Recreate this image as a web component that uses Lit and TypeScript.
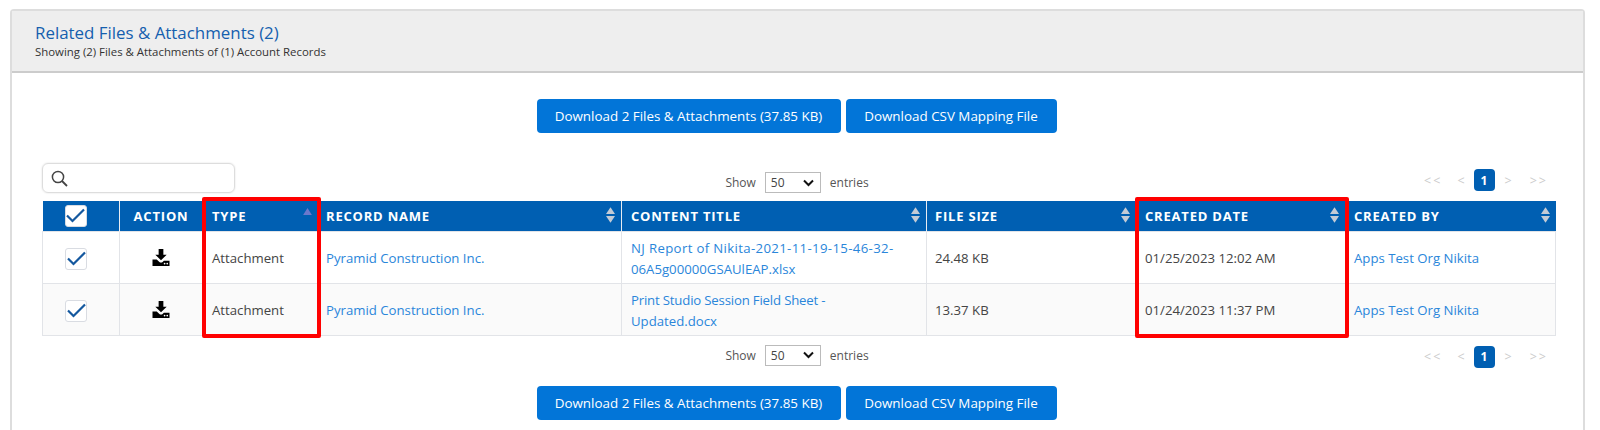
import { LitElement, html, css, svg } from "lit";
import { customElement } from "lit/decorators.js";

const COLS = [77, 84, 114, 304, 305, 210, 209, 210];

const check = html`<span class="cb"><svg width="19" height="15" viewBox="0 0 19 15"><path d="M1 7.5 L6.5 13 L18 1.5" fill="none" stroke="#14589f" stroke-width="2.2"/></svg></span>`;

const dl = html`<svg class="dl" width="18" height="17" viewBox="0 0 18 18"><path d="M6.5 0h5v6h3.5L9 12 3 6h3.5z" fill="#000"/><path d="M0 11h4.5L7 13.5a3 3 0 0 0 4 0L12 12.5h6V18H0z" fill="#000"/><circle cx="12.8" cy="15.4" r=".9" fill="#fff"/><circle cx="15.6" cy="15.4" r=".9" fill="#fff"/></svg>`;

const sort = html`<svg class="sort" width="9" height="16" viewBox="0 0 10 17"><path d="M5 0 10 7.5H0z" fill="#c3cbd6"/><path d="M5 17 10 9.5H0z" fill="#c3cbd6"/></svg>`;
const sortUp = html`<svg class="sortup" width="9" height="7" viewBox="0 0 10 8"><path d="M5 0 10 8H0z" fill="#6a78cc"/></svg>`;

const chevron = svg`<path d="M1 1.5 5.5 6 10 1.5" fill="none" stroke="#111" stroke-width="2"/>`;

@customElement("app-root")
export class AppRoot extends LitElement {
  static styles = css`
    :host { display: block; width: 1600px; height: 430px; overflow: hidden; background: #fff; font-family: "Open Sans", "Noto Sans", sans-serif; color: #444; }
    .card { margin: 9px 15px 0 10px; border: 1px solid #ddd; border-width: 2px 2px 0 2px; border-radius: 4px 4px 0 0; height: 500px; background: #fff; }
    .head { background: #eee; border-bottom: 2px solid #ccc; padding: 11px 0 0 23px; height: 49px; }
    .title { font-size: 16.9px; line-height: 22px; color: #155fae; }
    .sub { font-size: 11.4px; line-height: 14px; color: #333; margin-top: 1px; }
    .body { padding: 26px 28px 0 30px; }
    .btns { display: flex; justify-content: center; gap: 5px; margin-left: -4px; }
    .btn { background: #0275d8; color: #fff; border: 0; border-radius: 4px; height: 34px; font: 13.4px "Open Sans", sans-serif; display: flex; align-items: center; justify-content: center; }
    .b1 { width: 304px; }
    .b2 { width: 211px; }
    .bar { display: grid; grid-template-columns: 1fr auto 1fr; height: 21px; }
    .top { margin-top: 30px; height: 38px; }
    .search { width: 193px; height: 30px; box-sizing: border-box; border: 1px solid #ddd; border-radius: 6px; box-shadow: 0 0 2px #ddd; display: flex; align-items: center; padding-left: 8px; }
    .len { display: flex; align-items: center; font-size: 12px; color: #555; grid-column: 2; margin-right: 3px; height: 21px; align-self: start; }
    .top .len { margin-top: 9px; }
    .sel { width: 56px; height: 21px; box-sizing: border-box; border: 1px solid #bbb; margin: 0 9px; display: flex; align-items: center; justify-content: space-between; padding: 0 6px 0 5px; color: #444; }
    .pager { grid-column: 3; justify-self: end; align-self: start; height: 22px; margin-top: 1px; display: flex; align-items: center; font-size: 12.5px; color: #ccc; letter-spacing: 2px; margin-right: 7px; }
    .top .pager { margin-top: 6px; }
    .pg { display: inline-block; white-space: nowrap; }
    .cur { width: 21px; height: 22px; background: #005fb2; color: #fff; border-radius: 4px; display: flex; align-items: center; justify-content: center; font-weight: 700; letter-spacing: 0; font-size: 12px; margin: 0 10px 0 7px; }
    .gap { margin-right: 15px; }
    .gap2 { margin-left: 16px; }
    .wrap { position: relative; width: 1513px; }
    table { border-collapse: collapse; table-layout: fixed; width: 1513px; font-size: 13.2px; }
    th { background: #005fb2; color: #fff; height: 30px; box-sizing: border-box; padding: 0 8px; text-align: left; font-size: 13px; font-weight: 700; letter-spacing: .8px; position: relative; border-left: 1px solid #e8ecf2; white-space: nowrap; }
    th:first-child { border-left: 0; }
    th:nth-child(5), td:nth-child(5) { padding-left: 9px; }
    th.center, td.center { text-align: center; padding: 0 2px 0 0; }
    th.center { padding: 0 1px 0 0; }
    th.first, td.first { padding: 0 0 0 22px; }
    td { height: 52px; box-sizing: border-box; padding: 3px 8px 0; border: 1px solid #e2e4e8; line-height: 21px; color: #444; }
    td.first { padding-top: 3px; }
    tr.alt td { background: #fafafa; }
    a { color: #2a86da; text-decoration: none; }
    .wide { letter-spacing: .35px; }
    .tight { letter-spacing: -.18px; }
    .cb { display: inline-flex; width: 22px; height: 22px; box-sizing: border-box; background: #fff; border: 1px solid #d9dce2; border-radius: 3px; align-items: center; justify-content: center; vertical-align: middle; }
    .dl { vertical-align: middle; }
    .sort { position: absolute; right: 6px; top: 6px; }
    .sortup { position: absolute; right: 5px; top: 7px; }
    .red { position: absolute; border: 4px solid #f00; border-radius: 2px; box-sizing: border-box; top: -4px; height: 141px; pointer-events: none; }
    .r1 { left: 160px; width: 119px; }
    .r2 { left: 1093px; width: 214px; }
    .bottom { margin-top: 9px; }
    .btns2 { margin-top: 20px; }
  `;

  private bar(cls: string, search: boolean) {
    return html`<div class="bar ${cls}">
      ${search ? html`<div class="search"><svg width="17" height="17" viewBox="0 0 17 17"><circle cx="7" cy="7" r="5.6" fill="none" stroke="#444" stroke-width="1.5"/><path d="M11 11l5 5" stroke="#444" stroke-width="1.8"/></svg></div>` : ""}
      <div class="len">Show<span class="sel">50<svg width="11" height="8" viewBox="0 0 11 8">${chevron}</svg></span>entries</div>
      <div class="pager"><span class="pg gap">&lt;&lt;</span><span class="pg">&lt;</span><span class="cur">1</span><span class="pg">&gt;</span><span class="pg gap2">&gt;&gt;</span></div>
    </div>`;
  }

  private buttons(cls = "") {
    return html`<div class="btns ${cls}"><div class="btn b1">Download 2 Files &amp; Attachments (37.85 KB)</div><div class="btn b2">Download CSV Mapping File</div></div>`;
  }

  render() {
    const rows = [
      { alt: false, title: html`<span class="wide">NJ Report of Nikita-2021-11-19-15-46-32-</span><br>06A5g00000GSAUlEAP.xlsx`, size: "24.48 KB", date: "01/25/2023 12:02 AM" },
      { alt: true, title: html`<span class="tight">Print Studio Session Field Sheet -</span><br>Updated.docx`, size: "13.37 KB", date: "01/24/2023 11:37 PM" },
    ];
    return html`<div class="card">
      <div class="head">
        <div class="title">Related Files &amp; Attachments (2)</div>
        <div class="sub">Showing (2) Files &amp; Attachments of (1) Account Records</div>
      </div>
      <div class="body">
        ${this.buttons()}
        ${this.bar("top", true)}
        <div class="wrap">
          <table>
            <colgroup>${COLS.map((w) => html`<col style="width:${w}px">`)}</colgroup>
            <thead><tr>
              <th class="first">${check}</th>
              <th class="center">ACTION</th>
              <th>TYPE${sortUp}</th>
              <th>RECORD NAME${sort}</th>
              <th>CONTENT TITLE${sort}</th>
              <th>FILE SIZE${sort}</th>
              <th>CREATED DATE${sort}</th>
              <th>CREATED BY${sort}</th>
            </tr></thead>
            <tbody>
              ${rows.map((r) => html`<tr class=${r.alt ? "alt" : ""}>
                <td class="first">${check}</td>
                <td class="center">${dl}</td>
                <td>Attachment</td>
                <td><a>Pyramid Construction Inc.</a></td>
                <td><a>${r.title}</a></td>
                <td>${r.size}</td>
                <td>${r.date}</td>
                <td><a>Apps Test Org Nikita</a></td>
              </tr>`)}
            </tbody>
          </table>
          <div class="red r1"></div>
          <div class="red r2"></div>
        </div>
        ${this.bar("bottom", false)}
        ${this.buttons("btns2")}
      </div>
    </div>`;
  }
}
